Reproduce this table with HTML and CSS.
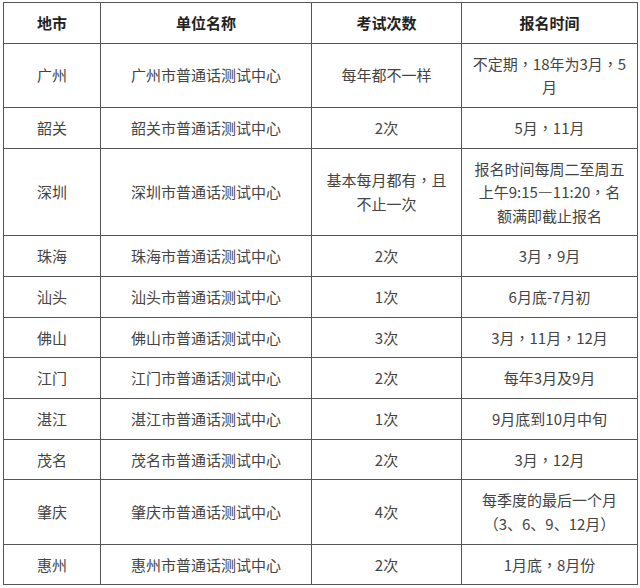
FILE: index.html
```html
<!DOCTYPE html>
<html lang="zh-CN">
<head>
<meta charset="utf-8">
<link rel="stylesheet" href="styles.css">
</head>
<body>
<table class="exam-table">
  <colgroup>
    <col class="c-city">
    <col class="c-unit">
    <col class="c-count">
    <col class="c-time">
  </colgroup>
  <thead>
    <tr><th>地市</th><th>单位名称</th><th>考试次数</th><th>报名时间</th></tr>
  </thead>
  <tbody>
    <tr><td>广州</td><td>广州市普通话测试中心</td><td>每年都不一样</td><td>不定期<span class="pc" lang="zh-TW">，</span>18年为3月<span class="pc" lang="zh-TW">，</span>5<br>月</td></tr>
    <tr><td>韶关</td><td>韶关市普通话测试中心</td><td>2次</td><td>5月<span class="pc" lang="zh-TW">，</span>11月</td></tr>
    <tr><td>深圳</td><td>深圳市普通话测试中心</td><td>基本每月都有<span class="pc" lang="zh-TW">，</span>且<br>不止一次</td><td>报名时间每周二至周五<br>上午9:15—11:20<span class="pc" lang="zh-TW">，</span>名<br>额满即截止报名</td></tr>
    <tr><td>珠海</td><td>珠海市普通话测试中心</td><td>2次</td><td>3月<span class="pc" lang="zh-TW">，</span>9月</td></tr>
    <tr><td>汕头</td><td>汕头市普通话测试中心</td><td>1次</td><td>6月底-7月初</td></tr>
    <tr><td>佛山</td><td>佛山市普通话测试中心</td><td>3次</td><td>3月<span class="pc" lang="zh-TW">，</span>11月<span class="pc" lang="zh-TW">，</span>12月</td></tr>
    <tr><td>江门</td><td>江门市普通话测试中心</td><td>2次</td><td>每年3月及9月</td></tr>
    <tr><td>湛江</td><td>湛江市普通话测试中心</td><td>1次</td><td>9月底到10月中旬</td></tr>
    <tr><td>茂名</td><td>茂名市普通话测试中心</td><td>2次</td><td>3月<span class="pc" lang="zh-TW">，</span>12月</td></tr>
    <tr><td>肇庆</td><td>肇庆市普通话测试中心</td><td>4次</td><td>每季度的最后一个月<br>（3、6、9、12月）</td></tr>
    <tr><td>惠州</td><td>惠州市普通话测试中心</td><td>2次</td><td>1月底<span class="pc" lang="zh-TW">，</span>8月份</td></tr>
  </tbody>
</table>
</body>
</html>
```
FILE: styles.css
```css
html, body {
  margin: 0;
  padding: 0;
  background: #ffffff;
}
body {
  padding: 2px 0 0 3px;
  font-family: "Noto Sans CJK SC", "Noto Sans", sans-serif;
  font-size: 15px;
  color: #444444;
}
.exam-table {
  border-collapse: collapse;
  table-layout: fixed;
  width: 634px;
}
.c-city { width: 97px; }
.c-unit { width: 211px; }
.c-count { width: 150px; }
.c-time { width: 176px; }
.exam-table th,
.exam-table td {
  border: 1px solid #555555;
  text-align: center;
  vertical-align: middle;
  line-height: 23.5px;
  padding: 8px 6px 8.2px;
}
.exam-table th {
  font-weight: bold;
  color: #222222;
}
.pc {
  font-family: "Noto Sans CJK TC", "Noto Sans CJK SC", sans-serif;
}
```
